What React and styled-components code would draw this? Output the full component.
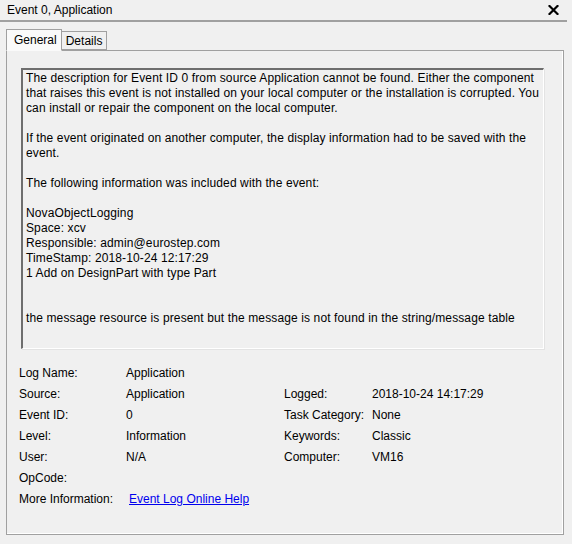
import React from 'react'
import styled, { createGlobalStyle } from 'styled-components'

const GlobalStyle = createGlobalStyle`
  html, body {
    margin: 0;
    padding: 0;
    background: #f0f0f0;
  }
  body {
    font-family: "Liberation Sans", Arial, sans-serif;
    font-size: 12px;
    color: #000;
  }
`

const Window = styled.div`
  width: 572px;
  height: 544px;
  background: #f0f0f0;
  display: flex;
  flex-direction: column;
  overflow: hidden;
`

const TitleBar = styled.div`
  width: 567px;
  height: 22px;
  box-sizing: border-box;
  border-bottom: 2px solid #a0a0a0;
  display: flex;
  align-items: center;
  justify-content: space-between;
  padding: 0 8px 0 7px;
`

const Title = styled.span`
  font-size: 12px;
  line-height: 15px;
`

const CloseButton = styled.button`
  border: 0;
  background: none;
  padding: 0;
  width: 12px;
  height: 12px;
  display: flex;
  align-items: center;
  justify-content: center;
  cursor: pointer;
`

const Body = styled.div`
  padding: 6px 8px 9px 6px;
  flex: 1;
  display: flex;
  flex-direction: column;
  min-height: 0;
`

const TabStrip = styled.div`
  display: flex;
  align-items: flex-end;
  height: 22px;
  position: relative;
  z-index: 1;
`

const Tab = styled.div`
  box-sizing: border-box;
  height: ${p => (p.$active ? '22px' : '19px')};
  padding: ${p => (p.$active ? '0 4px 0 7px' : '1px 4px 0 4px')};
  border: 1px solid #a0a0a0;
  border-bottom: ${p => (p.$active ? '1px solid #fafafa' : '1px solid #a0a0a0')};
  border-left: ${p => (p.$inactiveAfter ? '0' : '1px solid #a0a0a0')};
  background: ${p => (p.$active ? '#fafafa' : '#f0f0f0')};
  display: flex;
  align-items: center;
  margin-bottom: ${p => (p.$active ? '-1px' : '0')};
  line-height: 15px;
`

const Panel = styled.div`
  flex: 1;
  box-sizing: border-box;
  border: 1px solid #a0a0a0;
  box-shadow: inset -1px -1px 0 #ffffff;
  background: #f0f0f0;
  padding: 17px 19px 0 14px;
  display: flex;
  flex-direction: column;
`

const MessageBox = styled.div`
  height: 281px;
  box-sizing: border-box;
  border-top: 2px solid #6e6e6e;
  border-left: 2px solid #6e6e6e;
  border-right: 1px solid #ffffff;
  border-bottom: 1px solid #ffffff;
  box-shadow: 1px 1px 0 #e3e3e3;
  padding: 1px 3px;
  line-height: 15px;
  letter-spacing: 0.12px;
  white-space: pre;
  overflow: hidden;
`

const Fields = styled.div`
  display: grid;
  grid-template-columns: 107px 158px 88px 1fr;
  grid-auto-rows: 21px;
  align-items: center;
  margin: 14px 0 0 -2px;
  line-height: 15px;
`

const Label = styled.span``

const Value = styled.span``

const Link = styled.a`
  color: #0000ee;
  text-decoration: underline;
  padding-left: 3px;
  grid-column: span 3;
  cursor: pointer;
`

const message = `The description for Event ID 0 from source Application cannot be found. Either the component
that raises this event is not installed on your local computer or the installation is corrupted. You
can install or repair the component on the local computer.

If the event originated on another computer, the display information had to be saved with the
event.

The following information was included with the event:

NovaObjectLogging
Space: xcv
Responsible: admin@eurostep.com
TimeStamp: 2018-10-24 12:17:29
1 Add on DesignPart with type Part


the message resource is present but the message is not found in the string/message table`

const rows = [
  ['Log Name:', 'Application', '', ''],
  ['Source:', 'Application', 'Logged:', '2018-10-24 14:17:29'],
  ['Event ID:', '0', 'Task Category:', 'None'],
  ['Level:', 'Information', 'Keywords:', 'Classic'],
  ['User:', 'N/A', 'Computer:', 'VM16'],
  ['OpCode:', '', '', ''],
]

const CloseIcon = () => (
  <svg width="11" height="10" viewBox="0 0 11 10">
    <path d="M1.5 1 L9.5 9 M9.5 1 L1.5 9" stroke="#000" strokeWidth="2.2" strokeLinecap="square" />
  </svg>
)

const App = () => (
  <>
    <GlobalStyle />
    <Window>
      <TitleBar>
        <Title>Event 0, Application</Title>
        <CloseButton aria-label="Close">
          <CloseIcon />
        </CloseButton>
      </TitleBar>
      <Body>
        <TabStrip>
          <Tab $active>General</Tab>
          <Tab $inactiveAfter>Details</Tab>
        </TabStrip>
        <Panel>
          <MessageBox>{message}</MessageBox>
          <Fields>
            {rows.map(([l1, v1, l2, v2]) => (
              <React.Fragment key={l1}>
                <Label>{l1}</Label>
                <Value>{v1}</Value>
                <Label>{l2}</Label>
                <Value>{v2}</Value>
              </React.Fragment>
            ))}
            <Label>More Information:</Label>
            <Link>Event Log Online Help</Link>
          </Fields>
        </Panel>
      </Body>
    </Window>
  </>
)

export default App
